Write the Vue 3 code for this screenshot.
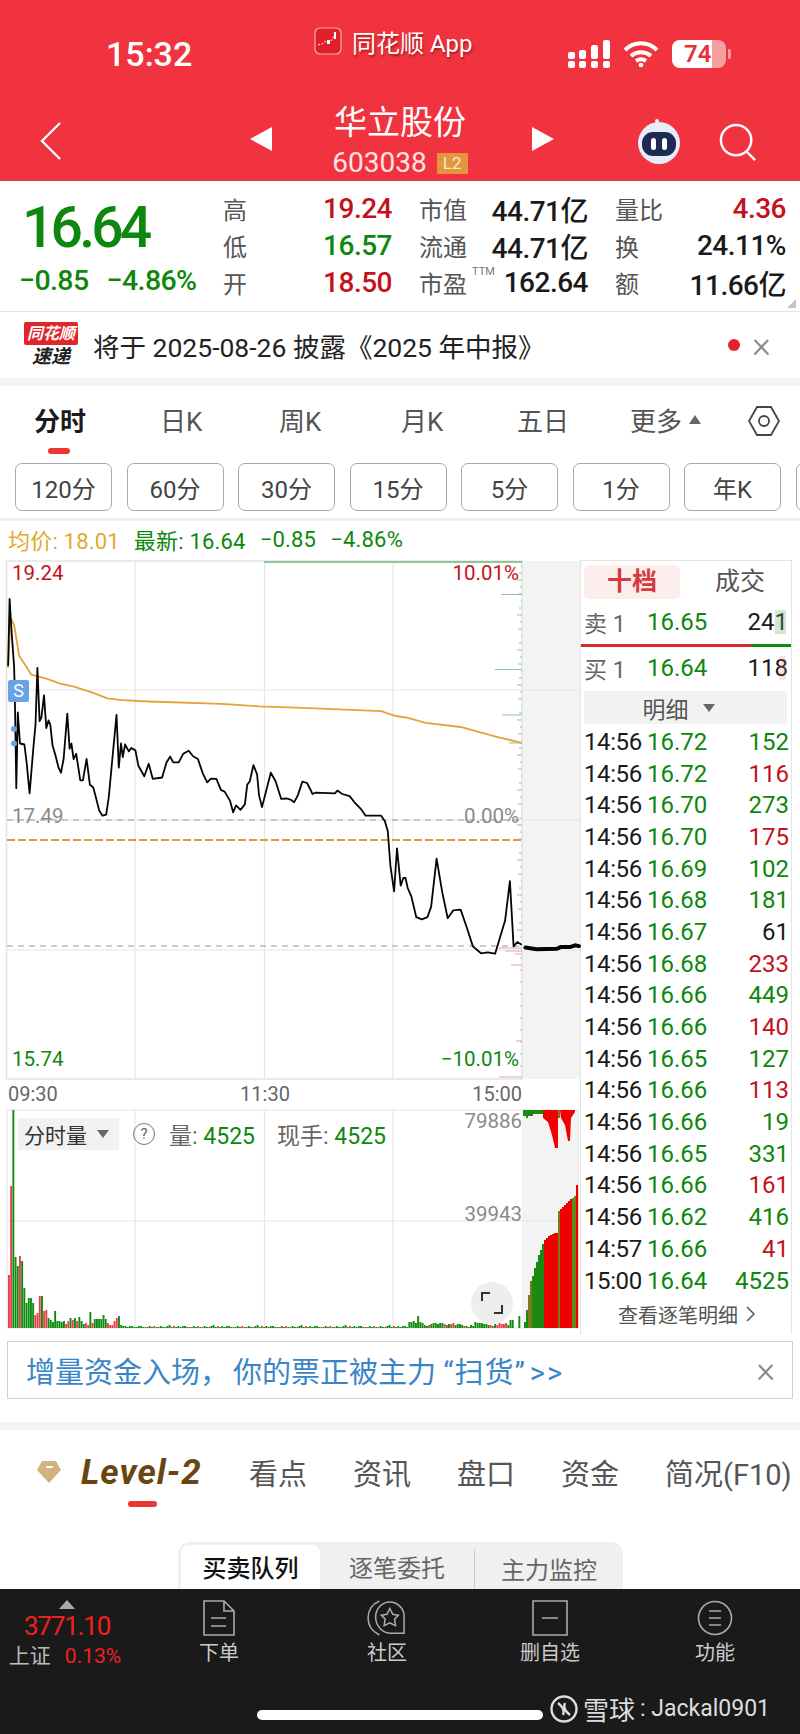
<template>
  <div class="page">
    <header class="topbar">
      <div class="status">
        <span class="clock">15:32</span>
        <div class="appname">
          <svg class="applogo" viewBox="0 0 28 28">
            <rect x="1" y="1" width="26" height="26" rx="5" fill="#e0202c" stroke="#f8b0b0" stroke-width="1.2" />
            <path d="M4 18l4-1 4-3 5 0 5-8" fill="none" stroke="#fff" stroke-width="1" stroke-dasharray="2 1.5" />
            <rect x="13" y="13" width="3" height="4" fill="#fff" />
            <rect x="20" y="5" width="2" height="7" fill="#fff" />
          </svg>
          <span>同花顺 App</span>
        </div>
        <div class="sysicons">
          <svg width="42" height="30" viewBox="0 0 42 30" fill="#fff">
            <rect x="0" y="13" width="7" height="7" rx="2" /><rect x="0" y="22" width="7" height="7" rx="2" />
            <rect x="11" y="11" width="7" height="9" rx="2" /><rect x="11" y="22" width="7" height="7" rx="2" />
            <rect x="23" y="6" width="7" height="14" rx="2" /><rect x="23" y="22" width="7" height="7" rx="2" />
            <rect x="35" y="1" width="7" height="19" rx="2" /><rect x="35" y="22" width="7" height="7" rx="2" />
          </svg>
          <svg width="36" height="28" viewBox="0 0 36 28" fill="none" stroke="#fff" stroke-width="4">
            <path d="M2 10c9-9 23-9 32 0" />
            <path d="M8 16c6-5 14-5 20 0" />
            <path d="M13 21c3-2 7-2 10 0" />
            <circle cx="18" cy="25" r="1.6" fill="#fff" stroke-width="1.5" />
          </svg>
          <div class="battery"><i class="battery-fill"></i><b>74</b></div>
          <i class="battery-nub"></i>
        </div>
      </div>
      <div class="navbar">
        <svg class="back" width="22" height="38" viewBox="0 0 22 38" fill="none" stroke="#fff" stroke-width="2.4">
          <path d="M20 1L2 19l18 18" />
        </svg>
        <i class="tri tri-left"></i>
        <div class="stock">
          <div class="stock-name">华立股份</div>
          <div class="stock-code">603038<span class="l2">L2</span></div>
        </div>
        <i class="tri tri-right"></i>
        <svg class="robot" width="48" height="46" viewBox="0 0 48 46">
          <circle cx="22" cy="3" r="2" fill="#eef" />
          <path d="M22 3l2 6" stroke="#eef" stroke-width="1.5" />
          <circle cx="24" cy="25" r="21" fill="#e8ecf8" />
          <rect x="7" y="14" width="34" height="24" rx="11" fill="#1d2a55" />
          <rect x="16" y="20" width="5" height="12" rx="2.5" fill="#fff" />
          <rect x="27" y="20" width="5" height="12" rx="2.5" fill="#fff" />
        </svg>
        <svg class="search" width="38" height="38" viewBox="0 0 40 40" fill="none" stroke="#fff" stroke-width="2.6">
          <circle cx="18" cy="18" r="16" />
          <path d="M29 30l9 9" />
        </svg>
      </div>
    </header>

    <section class="quote">
      <div class="price-block">
        <div class="price-big">16.64</div>
        <div class="price-change"><span>−0.85</span><span>−4.86%</span></div>
      </div>
      <div class="quote-cols">
        <div v-for="(col, c) in quoteCols" :key="c" class="quote-col" :class="'col' + c">
          <div v-for="row in col" :key="row.label" class="quote-row">
            <span class="q-label">{{ row.label }}<sup v-if="row.sup">TTM</sup></span>
            <span class="q-val" :class="row.color">{{ row.value }}</span>
          </div>
        </div>
      </div>
      <i class="corner"></i>
    </section>

    <section class="notice">
      <div class="notice-logo">
        <span class="notice-flag">同花顺</span>
        <span class="notice-sub">速递</span>
      </div>
      <span class="notice-text">将于 2025-08-26 披露《2025 年中报》</span>
      <i class="red-dot"></i>
      <span class="close">×</span>
    </section>

    <nav class="period-tabs">
      <div v-for="t in periodTabs" :key="t" class="period-tab" :class="{ active: t === '分时' }">
        {{ t }}<i v-if="t === '更多'" class="tiny-up"></i>
      </div>
      <svg class="hex" width="32" height="32" viewBox="0 0 32 32" fill="none" stroke="#444" stroke-width="1.8">
        <path d="M9 2h14l8 14-8 14H9L1 16z" />
        <circle cx="16" cy="16" r="5" />
      </svg>
    </nav>

    <div class="range-btns">
      <div v-for="b in rangeBtns" :key="b" class="range-btn">{{ b }}</div>
      <div class="range-btn"></div>
    </div>

    <div class="legend">
      <span class="gold">均价: 18.01</span>
      <span class="up">最新: 16.64</span>
      <span class="up">−0.85</span>
      <span class="up">−4.86%</span>
    </div>

    <section class="market">
      <div class="charts">
        <div class="price-chart">
          <svg width="580" height="524" class="overlay">
            <rect x="522" y="5" width="58" height="518" fill="#f3f3f3" />
            <rect x="6.500" y="5" width="515.500" height="518" fill="none" stroke="#e4e4e4" stroke-width="1.5" />
            <path d="M135 5V523M264.500 5V523M393 5V523M7 134H580M7 264H580M7 394H580" stroke="#e6e6e6" stroke-width="1.2" />
            <path d="M264 6H522" stroke="#8fc79a" stroke-width="2" />
            <path d="M7 264H522M7 390H522" stroke="#999" stroke-width="1" stroke-dasharray="6 5" />
            <path d="M7 284H522" stroke="#e09a3a" stroke-width="2" stroke-dasharray="8 3" />
            <path v-for="(t, i) in ticks" :key="i" :d="`M${t.x} ${t.y}H522`" :stroke="t.c" stroke-width="1" />
            <polyline :points="avgPoints" fill="none" stroke="#e2a33b" stroke-width="1.8" />
            <polyline :points="linePoints" fill="none" stroke="#050505" stroke-width="1.8" stroke-linejoin="round" />
            <polyline :points="afterPoints" fill="none" stroke="#050505" stroke-width="4" stroke-linecap="round" />
            <circle cx="14" cy="173" r="3" fill="#6aa2e6" />
            <circle cx="14" cy="187.500" r="3" fill="#6aa2e6" />
          </svg>
          <span class="s-mark">S</span>
          <span class="pl pl-tl red">19.24</span>
          <span class="pl pl-tr red">10.01%</span>
          <span class="pl pl-ml grey">17.49</span>
          <span class="pl pl-mr grey">0.00%</span>
          <span class="pl pl-bl up">15.74</span>
          <span class="pl pl-br up">−10.01%</span>
        </div>
        <div class="time-axis"><span>09:30</span><span>11:30</span><span>15:00</span></div>
        <div class="vol-chart">
          <svg width="580" height="222" viewBox="0 1108 580 222" class="overlay">
            <rect x="522" y="1110" width="56" height="218" fill="#f3f3f3" />
            <rect x="7" y="1110" width="571" height="218" fill="none" stroke="#e6e6e6" stroke-width="1.2" />
            <path d="M135 1110V1328M264.500 1110V1328M393 1110V1328M7 1221H578" stroke="#e6e6e6" stroke-width="1.2" />
            <rect v-for="(b, i) in volBars" :key="i" :x="b.x" :y="1328 - b.h" width="1.9" :height="b.h" :fill="b.c" />
            <rect v-for="(b, i) in auctionBars" :key="'a' + i" :x="b.x" :y="1328 - b.h" width="2.1" :height="b.h" :fill="b.c" />
            <path d="M523 1110h20v4h-10v2h-5v2h-2v-2h-3z" fill="#1a8a12" />
            <path d="M543 1110v8l5 4 4 13 3 13h3v-38zM560 1110l1 8 4 7 3 16h2l1-23 4-6v-2z" fill="#f00000" />
            <path d="M558 1110h2v8h-2z" fill="#7a7a1a" />
          </svg>
          <div class="vol-head">
            <div class="vol-select">分时量<i class="tiny-down"></i></div>
            <span class="q-mark">?</span>
            <span class="vol-item">量: <em>4525</em></span>
            <span class="vol-item">现手: <em>4525</em></span>
          </div>
          <span class="vol-scale top">79886</span>
          <span class="vol-scale mid">39943</span>
          <div class="expand">
            <svg width="22" height="22" viewBox="0 0 22 22" fill="none" stroke="#333" stroke-width="2">
              <path d="M1 9V1h8M21 13v8h-8" />
            </svg>
          </div>
        </div>
      </div>

      <aside class="depth">
        <div class="depth-tabs">
          <span class="depth-tab on">十档</span>
          <span class="depth-tab">成交</span>
        </div>
        <div class="book-row">
          <span class="book-label">卖 1</span><span class="up">16.65</span>
          <span class="book-qty">241<i class="qty-bg sell"></i></span>
        </div>
        <div class="ratio"><i class="ratio-red"></i><i class="ratio-green"></i></div>
        <div class="book-row second">
          <span class="book-label">买 1</span><span class="up">16.64</span>
          <span class="book-qty">118<i class="qty-bg buy"></i></span>
        </div>
        <div class="detail-head">明细<i class="tiny-down"></i></div>
        <div class="ticks">
          <div v-for="(r, i) in trades" :key="i" class="trade">
            <span class="trade-time">{{ r[0] }}</span>
            <span class="up">{{ r[1] }}</span>
            <span class="trade-qty" :class="r[3]">{{ r[2] }}</span>
          </div>
        </div>
        <div class="see-all">查看逐笔明细<svg width="10" height="16" viewBox="0 0 10 16" fill="none" stroke="#555" stroke-width="1.5"><path d="M1 1l7 7-7 7" /></svg></div>
      </aside>
    </section>

    <div class="ad">
      <span>增量资金入场<span class="ad-comma">，</span>你的票正被主力 <span class="ad-quote">“扫货”</span><span class="ad-more">&gt;&gt;</span></span>
      <span class="close">×</span>
    </div>

    <nav class="info-tabs">
      <svg class="gem" width="26" height="24" viewBox="0 0 26 24">
        <path d="M6 1h14l5 9-12 13L1 10z" fill="#d4b27e" />
        <rect x="10" y="6" width="7" height="2" rx="1" fill="#fff" />
      </svg>
      <div class="level2">Level-2<i></i></div>
      <span v-for="t in infoTabs" :key="t" class="info-tab">{{ t }}</span>
    </nav>

    <div class="segment-wrap">
      <div class="segment">
        <span class="seg on">买卖队列</span>
        <span class="seg">逐笔委托</span>
        <span class="seg last">主力监控</span>
      </div>
    </div>

    <footer class="bottom">
      <div class="index">
        <i class="index-up"></i>
        <div class="index-val">3771.10</div>
        <div class="index-row"><span>上证</span><b>0.13%</b></div>
      </div>
      <div class="tool">
        <svg width="34" height="36" viewBox="0 0 34 36" fill="none" stroke="#aaa" stroke-width="1.6">
          <path d="M2 1h20l10 10v24H2zM22 1v10h10M9 18h15M9 26h15" />
        </svg>
        <span>下单</span>
      </div>
      <div class="tool">
        <svg width="40" height="38" viewBox="0 0 40 38" fill="none" stroke="#aaa" stroke-width="1.6">
          <path d="M12 1C3 5 0 12 0 19s4 14 12 18" />
          <path d="M23 2c8 0 15 7 15 15v18H23C15 35 8 27 8 18S15 2 23 2z" />
          <path d="M23 9l3 6 6 1-4 4 1 7-6-3-6 3 1-7-4-4 6-1z" />
        </svg>
        <span>社区</span>
      </div>
      <div class="tool">
        <svg width="36" height="36" viewBox="0 0 36 36" fill="none" stroke="#aaa" stroke-width="1.6">
          <path d="M1 1h34v34H1zM10 18h16" />
        </svg>
        <span>删自选</span>
      </div>
      <div class="tool">
        <svg width="36" height="36" viewBox="0 0 36 36" fill="none" stroke="#aaa" stroke-width="1.6">
          <circle cx="18" cy="18" r="16.500" />
          <path d="M12 11h12M12 18h12M12 25h12" />
        </svg>
        <span>功能</span>
      </div>
      <div class="home-bar"></div>
      <div class="watermark">
        <svg width="28" height="30" viewBox="0 0 28 30" fill="none" stroke="#ddd" stroke-width="2.4">
          <circle cx="14" cy="15" r="12.500" />
          <path d="M8 9c5 4 7 8 5 12M20 21c-5-4-7-8-5-12" />
        </svg>
        <span class="wm-cn">雪球</span>
        <span>: Jackal0901</span>
      </div>
    </footer>
  </div>
</template>

<script setup>
const quoteCols = [
  [
    { label: '高', value: '19.24', color: 'red' },
    { label: '低', value: '16.57', color: 'up' },
    { label: '开', value: '18.50', color: 'red' }
  ],
  [
    { label: '市值', value: '44.71亿' },
    { label: '流通', value: '44.71亿' },
    { label: '市盈', value: '162.64', sup: true }
  ],
  [
    { label: '量比', value: '4.36', color: 'red' },
    { label: '换', value: '24.11%' },
    { label: '额', value: '11.66亿' }
  ]
]

const periodTabs = ['分时', '日K', '周K', '月K', '五日', '更多']
const rangeBtns = ['120分', '60分', '30分', '15分', '5分', '1分', '年K']
const infoTabs = ['看点', '资讯', '盘口', '资金', '简况(F10)']

const trades = [
  ['14:56', '16.72', '152', 'up'],
  ['14:56', '16.72', '116', 'red'],
  ['14:56', '16.70', '273', 'up'],
  ['14:56', '16.70', '175', 'red'],
  ['14:56', '16.69', '102', 'up'],
  ['14:56', '16.68', '181', 'up'],
  ['14:56', '16.67', '61', ''],
  ['14:56', '16.68', '233', 'red'],
  ['14:56', '16.66', '449', 'up'],
  ['14:56', '16.66', '140', 'red'],
  ['14:56', '16.65', '127', 'up'],
  ['14:56', '16.66', '113', 'red'],
  ['14:56', '16.66', '19', 'up'],
  ['14:56', '16.65', '331', 'up'],
  ['14:56', '16.66', '161', 'red'],
  ['14:56', '16.62', '416', 'up'],
  ['14:57', '16.66', '41', 'red'],
  ['15:00', '16.64', '4525', 'up']
]

// traced from the reference, raw pairs are x,y on a 1568 square crop of the chart
const toPoints = (raw) => {
  const out = []
  for (let i = 0; i < raw.length; i += 2) {
    out.push((raw[i] * 0.37).toFixed(1) + ',' + (raw[i + 1] * 0.344).toFixed(1))
  }
  return out.join(' ')
}

const linePoints = toPoints([
  22, 320, 26, 125, 32, 230, 38, 320, 40, 400, 44, 675, 48, 455, 54, 545, 66, 548, 72, 600, 80, 690, 90, 560, 96, 490,
  101, 325, 107, 480, 112, 470, 119, 405, 125, 500, 131, 478, 136, 490, 142, 550, 150, 580, 158, 615, 165, 630, 172, 590,
  182, 458, 188, 560, 193, 545, 199, 590, 206, 575, 217, 652, 224, 652, 234, 590, 243, 665, 252, 672, 260, 705, 268, 740,
  277, 755, 287, 752, 294, 700, 302, 610, 315, 462, 321, 615, 327, 545, 332, 585, 338, 548, 348, 568, 355, 558, 366, 565,
  374, 610, 390, 640, 402, 604, 413, 648, 438, 644, 450, 600, 460, 583, 468, 600, 483, 600, 495, 575, 510, 566, 522, 582,
  535, 590, 548, 632, 560, 658, 570, 647, 585, 648, 597, 680, 607, 685, 622, 712, 630, 745, 638, 725, 650, 738, 662, 722,
  668, 665, 675, 655, 685, 608, 695, 635, 700, 695, 708, 730, 732, 630, 745, 655, 760, 706, 775, 705, 785, 708, 795, 716,
  805, 695, 817, 656, 830, 660, 845, 692, 852, 688, 905, 690, 912, 682, 925, 692, 945, 698, 958, 716, 975, 735, 988, 755,
  1030, 755, 1040, 770, 1048, 800, 1055, 900, 1065, 975, 1073, 850, 1083, 958, 1090, 936, 1096, 936, 1102, 965, 1112, 990,
  1125, 1050, 1140, 1056, 1155, 1050, 1165, 1020, 1180, 880, 1195, 975, 1210, 1053, 1225, 1030, 1245, 1028, 1260, 1075,
  1278, 1135, 1300, 1155, 1318, 1152, 1338, 1156, 1365, 1060, 1378, 945, 1388, 1135, 1398, 1122, 1410, 1130
])
const afterPoints = toPoints([1420, 1138, 1450, 1143, 1505, 1142, 1515, 1137, 1540, 1137, 1555, 1132, 1565, 1134])
const avgPoints = toPoints([
  22, 325, 28, 180, 38, 200, 52, 290, 70, 320, 85, 345, 130, 358, 160, 370, 200, 380, 250, 397, 290, 414, 330, 419, 400, 423,
  600, 430, 700, 437, 800, 441, 1030, 451, 1070, 465, 1100, 470, 1150, 485, 1245, 497, 1340, 525, 1410, 543
])

const GREEN_TICK = '#8fc79a'
const RED_TICK = '#e3a3a8'
const ticks = [
  { x: 501, y: 38.5, c: GREEN_TICK },
  { x: 495, y: 113.5, c: GREEN_TICK },
  { x: 502, y: 159, c: GREEN_TICK },
  { x: 509, y: 187, c: GREEN_TICK },
  { x: 511, y: 409, c: RED_TICK },
  { x: 516, y: 485, c: RED_TICK },
  { x: 499, y: 521, c: RED_TICK },
  { x: 499, y: 392, c: RED_TICK },
  { x: 505, y: 395, c: RED_TICK },
  { x: 515, y: 398, c: RED_TICK }
]
for (let y = 10; y < 384; y += 7) {
  ticks.push({ x: 522 - (y % 5) - 1, y, c: GREEN_TICK })
}
for (let y = 402; y < 520; y += 12) {
  ticks.push({ x: 520, y, c: RED_TICK })
}

const GREEN = '#0f8c0f'
const RED = '#e8404a'
const volHead = [
  -53, -142, 218, 71, 62, -72, 67, 40, 25, 30, 30, 25, -13, -15, -32, 32, -17, -18, 10, 8, 6, 17, 7, 7, 6, 7, -4, -7, 10, -8,
  10, -7, 11, 7, 4, -5, -3, 16, -5, 9, 9, 9, 9, 13, 9, -5, -3, -3, -7, -10, 12, 3, 2, 2, 1, 2, 2, 1, 1
]
const volMid = [2, 1, -1, 1, 2, 1, -2, 1, 1, 2, 1, -1, 2, 3, 1, -2, 1, 2, 1, 2]
const volTail = [
  6, 6, 7, 5, 12, 6, 5, 3, 2, -3, 4, 5, 5, 4, 5, 5, -4, 3, 4, -4, -5, 3, 4, 4, 3, -2, 2, 1, 3, 2, 6, 5, 5, 5, 4, 4, 3, -3, -2,
  4, -3, -5, -4, -4, -5, 3, 8, 8, 0, 0, 12
]
const volHeights = [...volHead]
while (volHeights.length < 233 - volTail.length) {
  volHeights.push(volMid[volHeights.length % volMid.length])
}
volHeights.push(...volTail)
const volBars = volHeights.map((v, i) => ({
  x: 8 + i * 2.2,
  h: Math.abs(v),
  c: v < 0 ? RED : GREEN
}))

const auctionHeights = [6, 18, 33, 47, 52, 60, 66, 73, 78, 84, 88, 90, 92, 93, 94, 95, 95, 117, 119, 121, 123, 125, 127, 129, 130, 132, 143]
const auctionColor = (x) => {
  if (x < 528) return '#1a8a12'
  if (x < 532) return '#7a7a1a'
  if (x < 544) return '#1a8a12'
  if (x < 557) return '#f00000'
  if (x < 560) return '#7a7a1a'
  if (x < 572) return '#f00000'
  if (x < 576) return '#5f8a16'
  return '#f00000'
}
const auctionBars = auctionHeights.map((h, i) => {
  const x = 524 + i * 2
  return { x, h, c: auctionColor(x) }
})
</script>

<style>
body {
  margin: 0;
  background: #fff;
}
</style>

<style scoped>
.page {
  width: 800px;
  height: 1734px;
  overflow: hidden;
  background: #fff;
  color: #1a1a1a;
  font-family: Roboto, "Noto Sans CJK SC", sans-serif;
}
i {
  font-style: normal;
  display: block;
}
.up { color: #0d870d; }
.red { color: #c4121c; }
.grey { color: #8a8a8a; }
.gold { color: #e0aa2e; }

.topbar {
  height: 181px;
  background: #f0333e;
  color: #fff;
  box-sizing: border-box;
  border-bottom: 1px solid #d93a40;
}
.status {
  height: 100px;
  display: flex;
  position: relative;
}
.clock {
  margin: 34px 0 0 106px;
  font-size: 34px;
  font-weight: 500;
  line-height: 40px;
  width: 208px;
}
.appname {
  display: flex;
  align-items: center;
  gap: 10px;
  height: 30px;
  margin-top: 26px;
  font-size: 24px;
  width: 254px;
  text-shadow: 1px 2px 2px rgba(120, 0, 0, 0.5);
}
.applogo {
  width: 28px;
  height: 28px;
  flex: none;
}
.sysicons {
  display: flex;
  align-items: center;
  height: 30px;
  margin-top: 39px;
  gap: 13px;
}
.battery {
  position: relative;
  width: 54px;
  height: 28px;
  border-radius: 8px;
  background: #f7a0a0;
  overflow: hidden;
}
.battery-fill {
  width: 74%;
  height: 100%;
  background: #fff;
}
.battery-nub {
  width: 3px;
  height: 10px;
  margin-left: -11px;
  border-radius: 0 2px 2px 0;
  background: #f7a0a0;
}
.battery b {
  position: absolute;
  left: 12px;
  top: 0;
  line-height: 28px;
  font-size: 24px;
  font-weight: 600;
  color: #e8303a;
}
.navbar {
  height: 80px;
  display: flex;
  align-items: center;
  position: relative;
}
.back {
  margin: 1px 0 0 40px;
}
.tri {
  width: 0;
  height: 0;
  margin-top: -2px;
  border-top: 12px solid transparent;
  border-bottom: 12px solid transparent;
}
.tri-left {
  margin-left: 188px;
  border-right: 22px solid #fff;
}
.tri-right {
  border-left: 22px solid #fff;
}
.stock {
  width: 260px;
  text-align: center;
}
.stock-name {
  font-size: 33px;
  line-height: 42px;
  margin-top: 3px;
  padding-right: 4px;
}
.stock-code {
  font-size: 28px;
  line-height: 36px;
  margin-top: 1px;
  display: flex;
  align-items: center;
  justify-content: center;
  gap: 10px;
  color: #fde4e4;
  padding-right: 4px;
}
.l2 {
  width: 31px;
  height: 21px;
  line-height: 21px;
  background: #e3963e;
  color: #fbe7c7;
  font-size: 17px;
  text-align: center;
}
.robot {
  margin: 2px 0 0 81px;
}
.search {
  margin: 4px 0 0 36px;
}

.quote {
  height: 131px;
  display: flex;
  position: relative;
  border-bottom: 1px solid #e4e4e4;
  box-sizing: border-box;
}
.price-block {
  width: 223px;
  flex: none;
  box-sizing: border-box;
  padding-left: 19px;
}
.price-big {
  font-size: 57px;
  font-weight: 500;
  line-height: 60px;
  margin: 17px 0 0 3px;
  letter-spacing: -3.8px;
  color: #0d870d;
}
.price-change {
  display: flex;
  gap: 18px;
  font-size: 28.5px;
  font-weight: 500;
  line-height: 34px;
  margin-top: 6px;
  color: #0d870d;
  letter-spacing: -0.6px;
  white-space: nowrap;
}
.quote-cols {
  display: flex;
  gap: 27px;
  padding-top: 9px;
}
.quote-col {
  width: 169px;
}
.col2 {
  width: 171px;
}
.quote-row {
  display: flex;
  justify-content: space-between;
  align-items: center;
  height: 37px;
}
.q-label {
  font-size: 24px;
  color: #555;
  position: relative;
}
.q-label sup {
  position: absolute;
  left: 53px;
  top: 0;
  font-size: 11px;
  line-height: 14px;
  color: #777;
}
.q-val {
  font-size: 28px;
  font-weight: 500;
  letter-spacing: -0.5px;
}
.corner {
  position: absolute;
  right: 4px;
  bottom: 3px;
  width: 0;
  height: 0;
  border-left: 9px solid transparent;
  border-bottom: 9px solid #c4c4c4;
}

.notice {
  height: 66px;
  display: flex;
  align-items: center;
  border-bottom: 8px solid #f3f3f3;
  position: relative;
}
.notice-logo {
  width: 56px;
  margin-left: 23px;
  display: flex;
  flex-direction: column;
  align-items: center;
  font-style: italic;
  font-weight: 700;
}
.notice-flag {
  width: 54px;
  height: 23px;
  line-height: 23px;
  background: #e2242c;
  color: #fff;
  font-size: 16px;
  text-align: center;
  border-radius: 2px;
}
.notice-sub {
  font-size: 19px;
  line-height: 24px;
  color: #222;
}
.notice-text {
  font-size: 26.5px;
  margin-left: 14px;
  color: #222;
  white-space: nowrap;
}
.red-dot {
  width: 12px;
  height: 12px;
  border-radius: 50%;
  background: #e3242c;
  position: absolute;
  left: 728px;
}
.close {
  color: #888;
  font-size: 36px;
  line-height: 36px;
  font-weight: 300;
}
.notice .close {
  position: absolute;
  left: 752px;
}

.period-tabs {
  height: 77px;
  box-sizing: border-box;
  padding: 0 0 11px 34px;
  position: relative;
  display: grid;
  grid-template-columns: 126px 119px 122px 116px 113px 130px;
  align-items: center;
  font-size: 26px;
  color: #555;
}
.period-tab {
  display: flex;
  align-items: center;
  gap: 7px;
  white-space: nowrap;
}
.period-tab.active {
  font-weight: 700;
  color: #1a1a1a;
  position: relative;
}
.period-tab.active::after {
  content: "";
  position: absolute;
  left: 14px;
  top: 47px;
  width: 22px;
  height: 6px;
  background: #ee3636;
  border-radius: 3px;
}
.tiny-up {
  width: 0;
  height: 0;
  border-left: 6px solid transparent;
  border-right: 6px solid transparent;
  border-bottom: 9px solid #666;
}
.hex {
  position: absolute;
  left: 748px;
  top: 19px;
}
.range-btns {
  display: flex;
  gap: 14.5px;
  padding-left: 15px;
  overflow: hidden;
  height: 55px;
  border-bottom: 3px solid #efefef;
}
.range-btn {
  flex: none;
  width: 95px;
  height: 46px;
  border: 1px solid #a8a8a8;
  border-radius: 7px;
  display: flex;
  align-items: center;
  justify-content: center;
  font-size: 24px;
  color: #444;
}
.legend {
  height: 35px;
  box-sizing: border-box;
  padding: 1px 0 0 8px;
  display: flex;
  align-items: center;
  gap: 14px;
  font-size: 22px;
  letter-spacing: 0.2px;
}

.market {
  display: flex;
  height: 778px;
}
.charts {
  width: 580px;
  flex: none;
}
.price-chart {
  position: relative;
  height: 524px;
}
.overlay {
  position: absolute;
  left: 0;
  top: 0;
  overflow: visible;
}
.s-mark {
  position: absolute;
  left: 8px;
  top: 124px;
  width: 21px;
  height: 22px;
  background: #6aa2e6;
  border-radius: 2px;
  color: #fff;
  font-size: 18px;
  line-height: 22px;
  text-align: center;
}
.pl {
  position: absolute;
  font-size: 20.5px;
  line-height: 26px;
}
.pl-tl { left: 12px; top: 4px; }
.pl-tr { right: 61px; top: 4px; }
.pl-ml { left: 12px; top: 247px; }
.pl-mr { right: 61px; top: 247px; }
.pl-bl { left: 12px; top: 490px; }
.pl-br { right: 61px; top: 490px; }
.time-axis {
  height: 28px;
  display: flex;
  justify-content: space-between;
  align-items: center;
  width: 514px;
  padding-left: 8px;
  font-size: 20px;
  color: #666;
}
.vol-chart {
  position: relative;
  height: 222px;
}
.vol-head {
  position: relative;
  display: flex;
  align-items: center;
  padding: 10px 0 0 18px;
  font-size: 23px;
  color: #666;
  height: 32px;
}
.vol-select {
  width: 101px;
  height: 32px;
  box-sizing: border-box;
  padding-left: 6px;
  background: #f2f2f2;
  color: #333;
  font-size: 21px;
  display: flex;
  align-items: center;
  gap: 10px;
}
.tiny-down {
  width: 0;
  height: 0;
  border-left: 6px solid transparent;
  border-right: 6px solid transparent;
  border-top: 8px solid #666;
}
.q-mark {
  width: 20px;
  height: 20px;
  margin: 0 14px 0 14px;
  border: 1px solid #777;
  border-radius: 50%;
  font-size: 15px;
  line-height: 20px;
  text-align: center;
}
.vol-item {
  margin-right: 22px;
  white-space: nowrap;
}
.vol-item em {
  font-style: normal;
  color: #0d870d;
}
.vol-scale {
  position: absolute;
  right: 58px;
  font-size: 20.5px;
  line-height: 26px;
  color: #8a8a8a;
}
.vol-scale.top { top: 0; }
.vol-scale.mid { top: 93px; }
.expand {
  position: absolute;
  left: 471px;
  top: 174px;
  width: 42px;
  height: 42px;
  border-radius: 50%;
  background: #eee;
  display: flex;
  align-items: center;
  justify-content: center;
}

.depth {
  width: 212px;
  height: 774px;
  margin-top: 4px;
  box-sizing: border-box;
  border: 1px solid #e4e4e4;
  border-bottom: 0;
  padding: 0 1px 0 3px;
  font-size: 24px;
}
.depth-tabs {
  display: flex;
  height: 39px;
  box-sizing: border-box;
  padding-top: 4px;
  font-size: 25px;
  color: #555;
}
.depth-tab {
  width: 96px;
  height: 34px;
  line-height: 34px;
  text-align: center;
  border-radius: 5px;
}
.depth-tab + .depth-tab {
  margin-left: 12px;
}
.depth-tab.on {
  background: #fdeeee;
  color: #d63a3a;
  font-weight: 700;
}
.book-row {
  height: 44px;
  display: flex;
  align-items: center;
  position: relative;
}
.book-row.second {
  height: 42px;
}
.book-label {
  width: 63px;
  font-size: 23px;
  color: #666;
}
.book-qty {
  position: absolute;
  right: 2px;
  color: #1a1a1a;
}
.qty-bg {
  position: absolute;
  right: 2px;
  top: 2px;
  bottom: 2px;
  width: 11px;
  background: rgba(100, 180, 110, 0.3);
}
.qty-bg.buy {
  width: 7px;
  background: rgba(230, 120, 130, 0.2);
}
.ratio {
  display: flex;
  height: 3px;
  margin: 0 -1px 0 -3px;
}
.ratio-red {
  width: 170px;
  background: #d62a2a;
}
.ratio-green {
  flex: 1;
  background: #118a11;
}
.detail-head {
  height: 33px;
  margin-top: 2px;
  background: #f2f2f2;
  display: flex;
  align-items: center;
  justify-content: center;
  gap: 14px;
  color: #555;
  font-size: 23px;
  width: 203px;
  padding-right: 14px;
  box-sizing: border-box;
}
.ticks {
  margin-top: 2px;
}
.trade {
  height: 31.7px;
  display: flex;
  align-items: center;
  font-size: 24px;
}
.trade-time {
  width: 63px;
  letter-spacing: -0.4px;
}
.trade-qty {
  margin-left: auto;
  margin-right: 1px;
}
.see-all {
  display: flex;
  align-items: center;
  justify-content: center;
  gap: 8px;
  height: 38px;
  font-size: 20px;
  color: #555;
  margin-top: -1px;
}

.ad {
  width: 786px;
  height: 58px;
  margin: 7px 0 0 7px;
  box-sizing: border-box;
  border: 1.5px solid #d0d0d0;
  display: flex;
  align-items: center;
  justify-content: space-between;
  padding: 0 17px 0 18px;
  font-size: 29px;
  color: #3a85c8;
}
.ad-comma {
  margin-right: 4px;
}
.ad-quote {
  letter-spacing: 1px;
}
.ad-more {
  margin-left: 4px;
  letter-spacing: 2px;
}
.info-tabs {
  height: 120px;
  box-sizing: border-box;
  margin-top: 23px;
  padding-bottom: 28px;
  border-top: 8px solid #f3f3f3;
  display: flex;
  align-items: center;
  position: relative;
  font-size: 29px;
  color: #555;
}
.gem {
  flex: none;
  margin-left: 36px;
}
.level2 {
  flex: none;
  position: relative;
  margin: 0 46px 0 19px;
  width: 122px;
  font-size: 35px;
  line-height: 41px;
  font-weight: 700;
  font-style: italic;
  letter-spacing: 1px;
  color: #6a4510;
  white-space: nowrap;
}
.level2 i {
  position: absolute;
  left: 47px;
  top: 49px;
  width: 29px;
  height: 6px;
  background: #ee3636;
  border-radius: 3px;
}
.info-tab {
  flex: none;
  margin-right: 46px;
  white-space: nowrap;
}
.segment-wrap {
  height: 47px;
  padding-left: 178px;
  overflow: hidden;
}
.segment {
  width: 445px;
  height: 60px;
  box-sizing: border-box;
  padding: 3px 0 0 3px;
  background: #f0f0f0;
  border-radius: 12px 12px 0 0;
  display: flex;
  font-size: 24px;
  color: #666;
}
.seg {
  width: 154px;
  height: 60px;
  line-height: 48px;
  text-align: center;
}
.seg.on {
  width: 139px;
  background: #fff;
  color: #111;
  font-weight: 500;
  border-radius: 8px 8px 0 0;
}
.seg.last {
  border-left: 1px solid #ccc;
  height: 40px;
  margin-top: 4px;
  line-height: 44px;
  width: 148px;
}
.bottom {
  height: 145px;
  background: #1a1a1a;
  position: relative;
  display: grid;
  grid-template-columns: 134px 170px 166px 160px 170px;
  justify-items: center;
  align-items: start;
  padding-top: 11px;
  box-sizing: border-box;
}
.index {
  width: 134px;
  color: #bbb;
  display: flex;
  flex-direction: column;
  align-items: center;
}
.index-up {
  width: 0;
  height: 0;
  border-left: 8px solid transparent;
  border-right: 8px solid transparent;
  border-bottom: 9px solid #aaa;
}
.index-val {
  font-size: 26px;
  line-height: 32px;
  color: #f02020;
  margin-top: 1px;
  letter-spacing: -1.2px;
}
.index-row {
  display: flex;
  gap: 14px;
  align-items: center;
  font-size: 21px;
  line-height: 30px;
  margin: -1px 4px 0 0;
}
.index-row b {
  font-weight: 400;
  color: #f02020;
}
.tool {
  display: flex;
  flex-direction: column;
  align-items: center;
  color: #ccc;
  font-size: 20px;
  gap: 1px;
}
.tool svg {
  height: 36px;
}
.home-bar {
  position: absolute;
  left: 257px;
  top: 121px;
  width: 286px;
  height: 10px;
  border-radius: 5px;
  background: #fff;
}
.watermark {
  position: absolute;
  left: 550px;
  top: 101px;
  display: flex;
  align-items: center;
  gap: 5px;
  color: #ddd;
  font-size: 23px;
  white-space: nowrap;
}
.wm-cn {
  font-size: 26px;
}
</style>
